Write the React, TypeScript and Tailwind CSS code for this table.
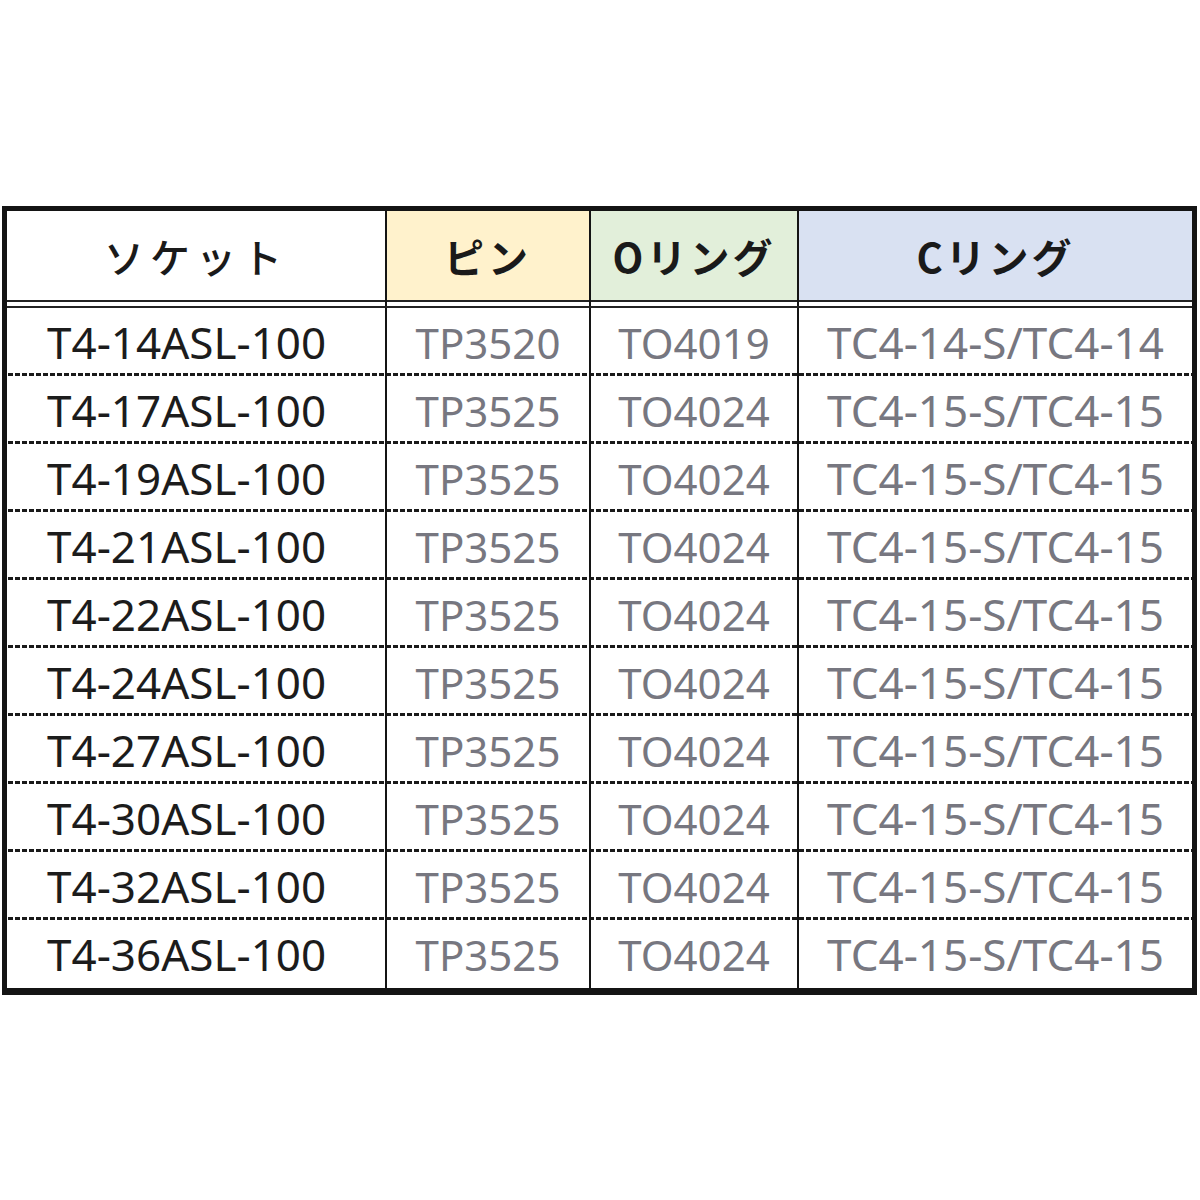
const rows = [
  ["T4-14ASL-100", "TP3520", "TO4019", "TC4-14-S/TC4-14"],
  ["T4-17ASL-100", "TP3525", "TO4024", "TC4-15-S/TC4-15"],
  ["T4-19ASL-100", "TP3525", "TO4024", "TC4-15-S/TC4-15"],
  ["T4-21ASL-100", "TP3525", "TO4024", "TC4-15-S/TC4-15"],
  ["T4-22ASL-100", "TP3525", "TO4024", "TC4-15-S/TC4-15"],
  ["T4-24ASL-100", "TP3525", "TO4024", "TC4-15-S/TC4-15"],
  ["T4-27ASL-100", "TP3525", "TO4024", "TC4-15-S/TC4-15"],
  ["T4-30ASL-100", "TP3525", "TO4024", "TC4-15-S/TC4-15"],
  ["T4-32ASL-100", "TP3525", "TO4024", "TC4-15-S/TC4-15"],
  ["T4-36ASL-100", "TP3525", "TO4024", "TC4-15-S/TC4-15"],
];

const widths = ["w-[380px]", "w-[204px]", "w-[208px]", "flex-1"];

const headers = [
  { label: "ソケット", bg: "bg-white", weight: "font-medium tracking-[6px]" },
  { label: "ピン", bg: "bg-[#fff2cc]", weight: "font-bold tracking-[4px]" },
  { label: "Oリング", bg: "bg-[#e2efda]", weight: "font-bold tracking-[3px]" },
  { label: "Cリング", bg: "bg-[#d9e1f2]", weight: "font-bold tracking-[3px]" },
];

// short dashes between body rows
const dashed =
  "bg-[linear-gradient(90deg,#1a1a1a_5px,transparent_5px)] bg-[length:7px_3px] bg-bottom bg-repeat-x";

export default function App() {
  return (
    <div className="w-[1200px] h-[1200px] bg-white pt-[206px] pl-[2px] font-['Noto_Sans','Noto_Sans_CJK_JP',sans-serif]">
      <div className="w-[1195px] border-[5px] border-b-[7px] border-[#141414]">
        {/* header */}
        <div className="flex">
          {headers.map((h, i) => (
            <div
              key={h.label}
              className={`${widths[i]} ${i < 3 ? "border-r-2 border-[#141414]" : ""} pb-[4px]`}
            >
              <div
                className={`${h.bg} h-[91px] border-b-2 border-[#222] flex items-center justify-center text-[40px] text-[#1a1a1a] font-['Noto_Sans_CJK_JP',sans-serif] ${h.weight}`}
              >
                {h.label}
              </div>
            </div>
          ))}
        </div>
        <div className="border-t-2 border-[#222]">
          {rows.map((r, ri) => (
            <div key={ri} className={`flex h-[68px] ${ri < rows.length - 1 ? dashed : ""}`}>
              {r.map((c, ci) => (
                <div
                  key={ci}
                  className={`${widths[ci]} ${ci < 3 ? "border-r-2 border-[#141414]" : ""} flex items-center ${
                    ci === 0
                      ? "pl-[40px] text-[44px] text-[#1c1c1c]"
                      : ci === 3
                        ? "justify-center text-[44px] text-[#777780]"
                        : "justify-center text-[42px] text-[#777780]"
                  }`}
                >
                  {c}
                </div>
              ))}
            </div>
          ))}
        </div>
      </div>
    </div>
  );
}
